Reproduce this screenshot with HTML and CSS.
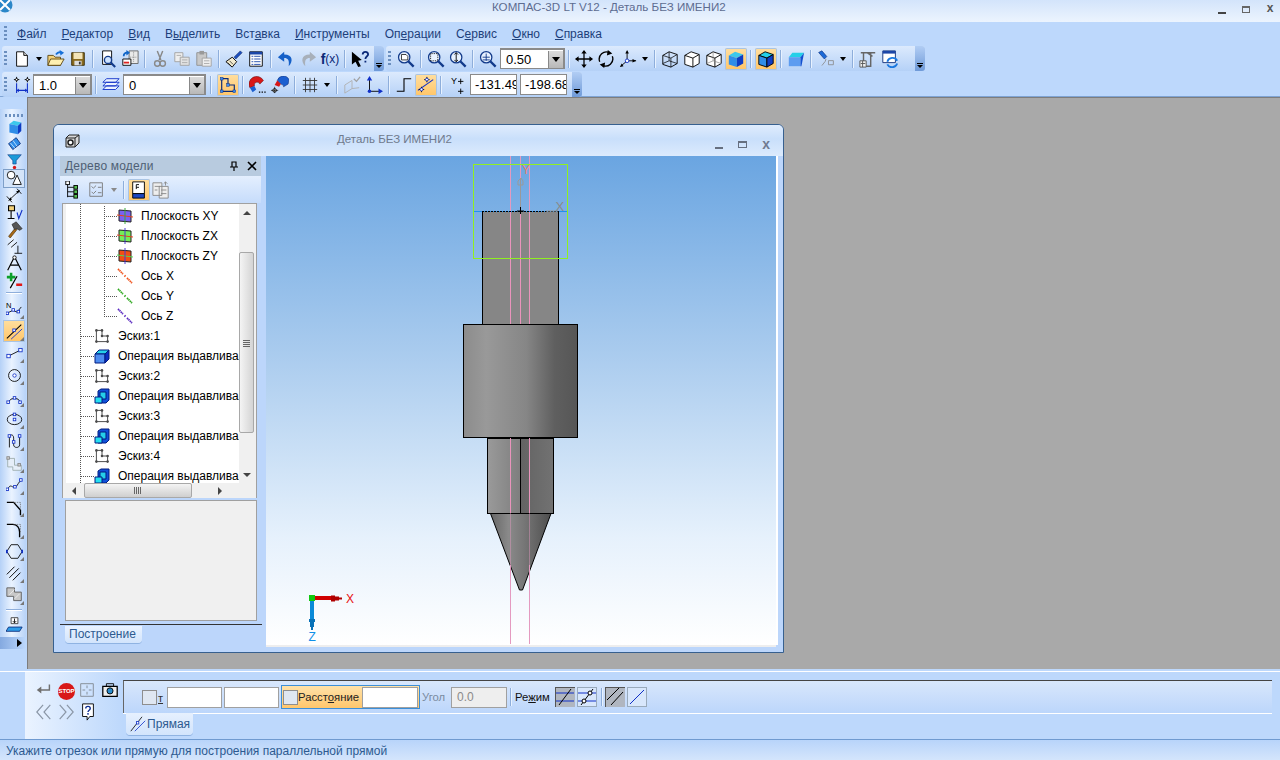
FILE: index.html
```html
<!DOCTYPE html>
<html lang="ru">
<head>
<meta charset="utf-8">
<title>КОМПАС-3D LT V12</title>
<link rel="stylesheet" href="styles.css">
</head>
<body>
<svg class="defs" aria-hidden="true">
<defs>
<symbol id="doc" viewBox="0 0 20 20"><path d="M4 2h8l4 4v12H4z" fill="#fff" stroke="#000"/><path d="M12 2v4h4" fill="#ddd" stroke="#000"/></symbol>
<symbol id="open" viewBox="0 0 20 20"><path d="M1 6h6l2 2h6v9H1z" fill="#f4d27a" stroke="#5b4510"/><path d="M1 17l3-7h15l-4 7z" fill="#fff0b0" stroke="#5b4510"/><path d="M10 5c2-3 4-3 6-2" fill="none" stroke="#1670d8" stroke-width="2"/><path d="M14 0l5 3-4 3z" fill="#1670d8"/></symbol>
<symbol id="save" viewBox="0 0 20 20"><path d="M3 3h14v14H3z" fill="#8a6b1e" stroke="#3a2c08"/><path d="M5 3h10v7H5z" fill="#f2e4b8"/><path d="M6 12h8v5H6z" fill="#ddd"/><path d="M11 13h2v3h-2z" fill="#333"/></symbol>
<symbol id="prev" viewBox="0 0 20 20"><path d="M4 1h10v15H4z" fill="#fff" stroke="#000"/><circle cx="10" cy="11" r="4" fill="#cfe4ff" stroke="#123a8a" stroke-width="1.5"/><path d="M13 14l5 5" stroke="#123a8a" stroke-width="2.4"/></symbol>
<symbol id="props" viewBox="0 0 20 20"><path d="M9 1h10v14H9z" fill="#e9e9e9" stroke="#666"/><path d="M14 2v12M10 8h8" stroke="#888" stroke-dasharray="1 1"/><path d="M2 10h9v7H2z" fill="#fff" stroke="#000"/><path d="M3 14h6" stroke="#d22" stroke-width="2"/><path d="M3 7c0-3 2-4 4-4" fill="none" stroke="#1266c8" stroke-width="2"/><path d="M6 0l4 3-4 3z" fill="#1266c8"/></symbol>
<symbol id="cut" viewBox="0 0 20 20"><path d="M7 1l4 10M13 1l-4 10" stroke="#888" stroke-width="1.6"/><circle cx="7" cy="15" r="3" fill="none" stroke="#8a8a8a" stroke-width="1.6"/><circle cx="13" cy="15" r="3" fill="none" stroke="#8a8a8a" stroke-width="1.6"/></symbol>
<symbol id="copy" viewBox="0 0 20 20"><path d="M2 3h9v10H2z" fill="#eee" stroke="#a0a0a0"/><path d="M8 8h10v9H8z" fill="#e2e2e2" stroke="#a0a0a0"/><path d="M4 6h5M10 11h6M10 14h6" stroke="#aaa"/></symbol>
<symbol id="paste" viewBox="0 0 20 20"><path d="M2 3h11v14H2z" fill="#c8c8c8" stroke="#909090"/><path d="M5 1h5v4H5z" fill="#999"/><path d="M8 9h10v9H8z" fill="#eee" stroke="#a0a0a0"/><path d="M10 12h6M10 15h6" stroke="#aaa"/></symbol>
<symbol id="brush" viewBox="0 0 20 20"><path d="M1 13l7-5 5 5-5 6z" fill="#f4ecd0" stroke="#000"/><path d="M3 14l4 4M5 12l4 4" stroke="#000" stroke-width=".7"/><path d="M10 8l7-7 2 2-7 7z" fill="#1c4fc0" stroke="#08205a" stroke-width=".6"/></symbol>
<symbol id="list" viewBox="0 0 20 20"><path d="M3 2h14v16H3z" fill="#fff" stroke="#000"/><path d="M3 2h14v3H3z" fill="#1b46a8"/><path d="M5 7h2M8 7h7M5 10h2M8 10h7M5 13h2M8 13h7M5 16h2M8 16h7" stroke="#1b46a8"/></symbol>
<symbol id="undo" viewBox="0 0 20 20"><path d="M8 2L1 8l7 5V9c4 0 6 2 5 9 5-5 5-13-5-13z" fill="#1560c8"/></symbol>
<symbol id="redo" viewBox="0 0 20 20"><path d="M12 2l7 6-7 5V9c-4 0-6 2-5 9-5-5-5-13 5-13z" fill="#a8b0ba"/></symbol>
<symbol id="help" viewBox="0 0 20 20"><path d="M1 2l11 9-4 1 3 6-3 1-3-6-4 3z" fill="#000"/><path d="M13 5c0-4 6-4 6 0 0 2-3 2-3 5M16 12v2" fill="none" stroke="#0c2a78" stroke-width="2"/></symbol>
<symbol id="zoomw" viewBox="0 0 20 20"><circle cx="8" cy="8" r="6.300" fill="#e8f2ff" stroke="#123a8a" stroke-width="1.400"/><path d="M5 5h5l2 2v4H5z" fill="#fff" stroke="#000" stroke-width=".8"/><path d="M12.500 12.500l6 6" stroke="#123a8a" stroke-width="2.600"/></symbol>
<symbol id="zoomd" viewBox="0 0 20 20"><circle cx="8" cy="8" r="6.300" fill="#e8f2ff" stroke="#123a8a" stroke-width="1.400"/><path d="M4 4h8v8H4z" fill="none" stroke="#000" stroke-dasharray="1 1"/><path d="M12.500 12.500l6 6" stroke="#123a8a" stroke-width="2.600"/></symbol>
<symbol id="zoomv" viewBox="0 0 20 20"><circle cx="8" cy="8" r="6.300" fill="#e8f2ff" stroke="#123a8a" stroke-width="1.400"/><path d="M8 3v10M6 5l2-2 2 2M6 11l2 2 2-2" fill="none" stroke="#000"/><path d="M12.500 12.500l6 6" stroke="#123a8a" stroke-width="2.600"/></symbol>
<symbol id="zoomp" viewBox="0 0 20 20"><circle cx="8" cy="8" r="6.300" fill="#e8f2ff" stroke="#123a8a" stroke-width="1.400"/><path d="M4 8h8M8 4v8M4 11h8" stroke="#123a8a"/><path d="M12.500 12.500l6 6" stroke="#123a8a" stroke-width="2.600"/></symbol>
<symbol id="move" viewBox="0 0 20 20"><path d="M10 1v18M1 10h18" stroke="#000" stroke-width="1.400"/><path d="M10 0l3 4H7zM10 20l3-4H7zM0 10l4-3v6zM20 10l-4-3v6z" fill="#000"/></symbol>
<symbol id="rot" viewBox="0 0 20 20"><path d="M3 13A8 8 0 0 1 14 3M17 7a8 8 0 0 1-11 10" fill="none" stroke="#000" stroke-width="1.500"/><path d="M12 0l5 4-6 2zM8 20l-5-4 6-2z" fill="#000"/></symbol>
<symbol id="axes" viewBox="0 0 20 20"><path d="M9 12V2M9 12h10M9 12l-7 6" stroke="#000"/><path d="M9 0l2 4H7zM19 12l-4-2v4zM1 19l2-4 2 3z" fill="#000"/><circle cx="9" cy="12" r="2" fill="#fff" stroke="#1030c8"/></symbol>
<symbol id="cube1" viewBox="0 0 20 20"><path d="M2 6l7-4 9 3v10l-7 4-9-3z" fill="none" stroke="#000"/><path d="M2 6l9 3 7-4M11 9v10M9 2v10l-7 3M9 12l9 3" fill="none" stroke="#000" stroke-width=".8"/></symbol>
<symbol id="cube2" viewBox="0 0 20 20"><path d="M2 6l7-4 9 3v10l-7 4-9-3z" fill="#fff" stroke="#000"/><path d="M2 6l9 3 7-4M11 9v10" fill="none" stroke="#000"/></symbol>
<symbol id="cube3" viewBox="0 0 20 20"><path d="M2 6l7-4 9 3v10l-7 4-9-3z" fill="#fff" stroke="#000"/><path d="M2 6l9 3 7-4M11 9v10" fill="none" stroke="#000"/><path d="M9 2v10l-7 3M9 12l9 3" fill="none" stroke="#888" stroke-width=".8"/></symbol>
<symbol id="cube4" viewBox="0 0 20 20"><path d="M2 6l7-4 9 3-7 4z" fill="#3cc8ec"/><path d="M2 6l9 3v10l-9-3z" fill="#2f8de8"/><path d="M11 9l7-4v10l-7 4z" fill="#0d3cc4"/></symbol>
<symbol id="cube5" viewBox="0 0 20 20"><path d="M2 6l7-4 9 3-7 4z" fill="#25d0e8" stroke="#000"/><path d="M2 6l9 3v10l-9-3z" fill="#2f8de8" stroke="#000"/><path d="M11 9l7-4v10l-7 4z" fill="#0d3cc4" stroke="#000"/></symbol>
<symbol id="cube6" viewBox="0 0 20 20"><path d="M6 3h13l-4 5H2z" fill="#25d0e8"/><path d="M2 8h13v10H2z" fill="#5d9cf0"/><path d="M15 8l4-5-3 15h-1z" fill="#1250d0"/></symbol>
<symbol id="light" viewBox="0 0 22 20"><path d="M2 2l4-2 6 7-3 3z" fill="#1c6ad8" stroke="#0a2a78" stroke-width=".7"/><path d="M11 10l-1 3-4 5M14 12h6v5h-6z" fill="none" stroke="#888"/></symbol>
<symbol id="crane" viewBox="0 0 20 20"><path d="M2 3h16M5 3v15h8V3M9 3l6 4" fill="none" stroke="#666" stroke-width="1.600"/><path d="M1 12h7v7H1z" fill="#eee" stroke="#555"/><path d="M2 15h5M4 12v7" stroke="#555"/></symbol>
<symbol id="refr" viewBox="0 0 20 20"><path d="M2 1h14v13H2z" fill="#fff" stroke="#10307a"/><path d="M2 1h14v3H2z" fill="#1b46a8"/><path d="M7 13a6 6 0 0 1 11-1M18 15a6 6 0 0 1-11 1" fill="none" stroke="#1b78e0" stroke-width="2"/></symbol>
<symbol id="snap" viewBox="0 0 20 20"><path d="M4 8v11M16 8v11M4 16h12" stroke="#1030c8" stroke-width="1.200"/><path d="M4 16l2.500-2v4zM16 16l-2.500-2v4z" fill="#1030c8"/><path d="M1 4h6M4 1v6M13 4h6M16 1v6" stroke="#000"/><circle cx="4" cy="4" r="1.300" fill="#fff" stroke="#000"/><circle cx="16" cy="4" r="1.300" fill="#fff" stroke="#000"/></symbol>
<symbol id="layers" viewBox="0 0 20 20"><path d="M5 3h14l-4 4H1zM5 7h14l-4 4H1zM5 11h14l-4 4H1z" fill="#eaf2ff" stroke="#1030c8"/></symbol>
<symbol id="sk" viewBox="0 0 20 20"><path d="M3 3v14h14v-7h-7V3z" fill="#fff" stroke="#222"/><circle cx="3" cy="3" r="1.600" fill="#4a4a4a"/><circle cx="10" cy="3" r="1.600" fill="#4a4a4a"/><circle cx="10" cy="10" r="1.600" fill="#4a4a4a"/><circle cx="17" cy="10" r="1.600" fill="#4a4a4a"/><circle cx="17" cy="17" r="1.600" fill="#4a4a4a"/><circle cx="3" cy="17" r="1.600" fill="#4a4a4a"/></symbol>
<symbol id="skb" viewBox="0 0 20 20"><path d="M3 3v14h14v-7h-7V3z" fill="none" stroke="#0a2a78" stroke-width="1.300"/><rect x="1.500" y="1.500" width="3" height="3" fill="#3c8cf0" stroke="#0a2a78" stroke-width=".5"/><rect x="8.500" y="8.500" width="3" height="3" fill="#3c8cf0" stroke="#0a2a78" stroke-width=".5"/><rect x="15.500" y="15.500" width="3" height="3" fill="#3c8cf0" stroke="#0a2a78" stroke-width=".5"/><rect x="1.500" y="15.500" width="3" height="3" fill="#3c8cf0" stroke="#0a2a78" stroke-width=".5"/></symbol>
<symbol id="mag1" viewBox="0 0 20 20"><path d="M1 13a8 8 0 0 1 15-8l-4 4a3 3 0 0 0-6 2z" fill="#d81818" stroke="#600" stroke-width=".6"/><path d="M1 13l5-2 2 4-4 3z" fill="#1c5fd0"/><path d="M11 18h1.500M14 18h1.500M17 18h1.500" stroke="#000" stroke-width="1.400"/></symbol>
<symbol id="mag2" viewBox="0 0 20 20"><path d="M20 4a7 7 0 0 0-13 1l4 4a3 3 0 0 1 3 3l5-3z" fill="#1c5fd0" stroke="#0a2a78" stroke-width=".6"/><path d="M7 5l4 4-2 3-5-2z" fill="#d81818"/><circle cx="4" cy="16" r="2" fill="#fff" stroke="#000"/><path d="M0 16h8M4 12v7" stroke="#000" stroke-width=".7"/></symbol>
<symbol id="grid" viewBox="0 0 20 20"><path d="M5 2v16M10 2v16M15 2v16M2 5h16M2 10h16M2 15h16" stroke="#333"/></symbol>
<symbol id="ang" viewBox="0 0 20 20"><path d="M2 10l8-5v9l-8 5zM10 14l8-1" fill="none" stroke="#b0b0b0"/><path d="M12 3l3 3 4-5" fill="none" stroke="#a0a0a0" stroke-width="1.400"/></symbol>
<symbol id="lcs" viewBox="0 0 20 20"><path d="M5 17V3M5 17h13" stroke="#000"/><path d="M5 0l3 5H2zM20 17l-5-3v6z" fill="#1030c8"/><circle cx="5" cy="17" r="2" fill="#1030c8"/></symbol>
<symbol id="step" viewBox="0 0 20 20"><path d="M2 17h8V3h8" fill="none" stroke="#000" stroke-width="1.200"/></symbol>
<symbol id="ortho" viewBox="0 0 20 20"><path d="M1 16L18 4" stroke="#1030c8" stroke-width="1.200"/><path d="M11 1v6M8 4h6M5 12v6M2 15h6" stroke="#000"/><circle cx="11" cy="4" r="1.600" fill="#fff" stroke="#1030c8"/><circle cx="5" cy="15" r="1.600" fill="#fff" stroke="#1030c8"/></symbol>
<symbol id="coord" viewBox="0 0 20 20"><path d="M13 3v6M10 6h6M13 14v6M10 17h6" stroke="#000"/></symbol>
<symbol id="tree1" viewBox="0 0 20 20"><path d="M4 1v17M4 7h7M4 12h7M4 17h7" stroke="#000"/><rect x="2" y="0" width="4" height="4" fill="#fff" stroke="#000"/><rect x="11" y="5" width="4" height="4" fill="#55c050" stroke="#000"/><rect x="11" y="10" width="4" height="4" fill="#55c050" stroke="#000"/><rect x="11" y="15" width="4" height="4" fill="#55c050" stroke="#000"/></symbol>
<symbol id="tree2" viewBox="0 0 20 20"><path d="M2 2h14v15H2z" fill="none" stroke="#777"/><path d="M4 6l2 2 3-3M4 12l2 2 3-3M11 7h4M11 13h4" fill="none" stroke="#777"/></symbol>
<symbol id="tree3" viewBox="0 0 20 20"><path d="M3 1h13v13H3z" fill="#fff" stroke="#000"/><path d="M3 14h13v5H3z" fill="#1c46c0" stroke="#000"/><path d="M7 4v5M7 4h3M7 7h3" stroke="#000"/></symbol>
<symbol id="tree4" viewBox="0 0 20 20"><path d="M1 2h10v14H1zM8 6h10v13H8z" fill="#eee" stroke="#888"/><path d="M3 6h6M3 10h3M10 10h6M10 14h6" stroke="#888"/><path d="M15 5V1M13 3l2-2 2 2" fill="none" stroke="#888"/></symbol>
<symbol id="pxy" viewBox="0 0 16 16"><path d="M2 2l12 1v11L2 13z" fill="#7a62f0" stroke="#222"/><path d="M0 7l16 2" stroke="#e8401c"/><path d="M8 0v16" stroke="#38a838"/></symbol>
<symbol id="pzx" viewBox="0 0 16 16"><path d="M2 2l12 1v11L2 13z" fill="#74ee58" stroke="#222"/><path d="M0 7l16 2" stroke="#e8401c"/><path d="M8 0v16" stroke="#4a3ad0"/></symbol>
<symbol id="pzy" viewBox="0 0 16 16"><path d="M2 2l12 1v11L2 13z" fill="#f24e14" stroke="#222"/><path d="M0 7l16 2" stroke="#50d850"/><path d="M8 0v16" stroke="#4a3ad0"/></symbol>
<symbol id="ax" viewBox="0 0 16 16"><path d="M1 1l5 5M7.500 7.500l1 1M10 10l5 5" fill="none" stroke="currentColor" stroke-width="1.800" stroke-dasharray="1.500 .5"/></symbol>
<symbol id="box1" viewBox="0 0 16 16"><path d="M1 6l4-4h10l-4 4z" fill="#25d0e8" stroke="#001a80"/><path d="M1 6h10v9H1z" fill="#4d8cf0" stroke="#001a80"/><path d="M11 6l4-4v9l-4 4z" fill="#0d2cc0" stroke="#001a80"/></symbol>
<symbol id="box2" viewBox="0 0 16 16"><path d="M4 3l3-2h8v11l-3 3H4z" fill="#1050d8" stroke="#001a80"/><path d="M6 4h6v7H6z" fill="#25d0e8" stroke="#001a80"/><path d="M1 9h7v6H1z" fill="#25e0f0" stroke="#001a80"/></symbol>
<symbol id="solid" viewBox="0 0 20 20"><path d="M4 6l5-4 9 2-4 4z" fill="#3cc8ec"/><path d="M4 6l10 2v10L4 16z" fill="#2f8de8"/><path d="M14 8l4-4v10l-4 4z" fill="#0d3cc4"/></symbol>
<symbol id="surf" viewBox="0 0 20 20"><path d="M3 9l9-7 5 7-9 7z" fill="#2f8de8" stroke="#0a2a78"/><path d="M8 5l5 7M5 8l6 7" stroke="#cfe8ff"/></symbol>
<symbol id="funnel" viewBox="0 0 20 20"><path d="M2 2h16l-6 7v4H8V9z" fill="#1c9ad8" stroke="#0a2a78" stroke-width=".6"/><circle cx="10" cy="17" r="2" fill="#d81818"/></symbol>
<symbol id="geom" viewBox="0 0 20 20"><circle cx="6" cy="6" r="4.500" fill="#fff" stroke="#000"/><path d="M13 6l5 11H8z" fill="#fff" stroke="#000"/></symbol>
<symbol id="dim" viewBox="0 0 20 20"><path d="M3 16L16 4M1 11l6 7M13 2l5 6" fill="none" stroke="#000"/><path d="M3 16l4-1-2-3zM16 4l-4 1 2 3z" fill="#000"/></symbol>
<symbol id="cons" viewBox="0 0 20 20"><path d="M3 2h7v6H3z" fill="#f4d27a"/><path d="M3 2h7v6H3zM6 8v9M2 17h8" fill="none" stroke="#000" stroke-width="1.300"/><path d="M13 10l2 7 4-10" fill="none" stroke="#1030c8" stroke-width="1.300"/></symbol>
<symbol id="hammer" viewBox="0 0 20 20"><path d="M3 18L11 8l2 2-8 10z" fill="#a86a18" stroke="#442a05" stroke-width=".7"/><path d="M7 4l5-3 7 8-3 2-3-2-3 1z" fill="#555" stroke="#222" stroke-width=".7"/></symbol>
<symbol id="para" viewBox="0 0 20 20"><path d="M2 8l7-6M6 11l7-6M10 18h9M14 18V9" fill="none" stroke="#000"/></symbol>
<symbol id="comp" viewBox="0 0 20 20"><path d="M10 2L2 18M10 2l8 16M5 12h10" fill="none" stroke="#000" stroke-width="1.400"/><circle cx="10" cy="3" r="2" fill="#fff" stroke="#000"/></symbol>
<symbol id="plus" viewBox="0 0 20 20"><path d="M6 1v10M1 6h10" stroke="#0ca02a" stroke-width="3"/><path d="M12 15h7" stroke="#e01818" stroke-width="3"/><path d="M5 19L13 5" stroke="#000" stroke-width="1.400"/></symbol>
<symbol id="poly" viewBox="0 0 20 20"><path d="M2 14l6-3 5 2 5-6" fill="none" stroke="#000"/><rect x="0" y="13" width="3" height="3" fill="#fff" stroke="#1030c8"/><rect x="7" y="9" width="3" height="3" fill="#fff" stroke="#1030c8"/><rect x="13" y="11" width="3" height="3" fill="#fff" stroke="#1030c8"/><text x="0" y="8" class="nmark">N</text></symbol>
<symbol id="pline" viewBox="0 0 20 20"><path d="M1 18L18 2" stroke="#000" stroke-width="1.200"/><path d="M6 19L19 7" stroke="#1030c8"/><rect x="8" y="7" width="3" height="3" fill="#fff" stroke="#1030c8"/></symbol>
<symbol id="seg" viewBox="0 0 20 20"><path d="M3 13l14-7" stroke="#000"/><rect x="1" y="11" width="4" height="4" fill="#fff" stroke="#1030c8"/><rect x="15" y="4" width="4" height="4" fill="#fff" stroke="#1030c8"/></symbol>
<symbol id="circ" viewBox="0 0 20 20"><circle cx="10" cy="10" r="7" fill="none" stroke="#000"/><circle cx="10" cy="10" r="2" fill="#fff" stroke="#1030c8"/></symbol>
<symbol id="arc" viewBox="0 0 20 20"><path d="M3 15A8 8 0 0 1 17 15" fill="none" stroke="#000"/><rect x="1" y="14" width="3" height="3" fill="#fff" stroke="#1030c8"/><rect x="8.500" y="9" width="3" height="3" fill="#fff" stroke="#1030c8"/><rect x="15" y="14" width="3" height="3" fill="#fff" stroke="#1030c8"/></symbol>
<symbol id="ell" viewBox="0 0 20 20"><ellipse cx="10" cy="10" rx="8.500" ry="6" fill="none" stroke="#000"/><rect x="8.500" y="8.500" width="3" height="3" fill="#fff" stroke="#1030c8"/><rect x="8.500" y="2.500" width="3" height="3" fill="#fff" stroke="#1030c8"/></symbol>
<symbol id="spl" viewBox="0 0 20 20"><path d="M4 17V6c0-5 5-5 5 0v8c0 4 7 4 7 0V3" fill="none" stroke="#000"/><rect x="2.500" y="2" width="3" height="3" fill="#fff" stroke="#1030c8"/><rect x="14.500" y="2" width="3" height="3" fill="#fff" stroke="#1030c8"/><rect x="7.500" y="9" width="3" height="3" fill="#fff" stroke="#1030c8"/></symbol>
<symbol id="lin" viewBox="0 0 20 20"><path d="M2 4h8v8h8v6H8v-4H2z" fill="#e6eef8" stroke="#9aa"/><rect x="1" y="2" width="3" height="3" fill="#ccc" stroke="#888"/><rect x="14" y="10" width="3" height="3" fill="#ccc" stroke="#888"/></symbol>
<symbol id="nurb" viewBox="0 0 20 20"><path d="M2 15c3-9 6-1 9-3s4-7 7-8" fill="none" stroke="#000"/><rect x="0" y="13" width="3" height="3" fill="#fff" stroke="#1030c8"/><rect x="9" y="10" width="3" height="3" fill="#fff" stroke="#1030c8"/><rect x="16" y="2" width="3" height="3" fill="#fff" stroke="#1030c8"/></symbol>
<symbol id="ch" viewBox="0 0 20 20"><path d="M1 4h8l8 9v6" fill="none" stroke="#000" stroke-width="1.600"/><path d="M9 4h8v9" fill="none" stroke="#666" stroke-dasharray="1 1"/></symbol>
<symbol id="fil" viewBox="0 0 20 20"><path d="M1 4h7c5 0 8 4 8 9v6" fill="none" stroke="#000" stroke-width="1.600"/><path d="M9 4h8v9" fill="none" stroke="#666" stroke-dasharray="1 1"/></symbol>
<symbol id="hex" viewBox="0 0 20 20"><path d="M6 2h8l5 8-5 8H6l-5-8z" fill="none" stroke="#000"/><path d="M1 8v4M19 8v4" stroke="#1030c8" stroke-width="2"/></symbol>
<symbol id="eq" viewBox="0 0 20 20"><path d="M1 11l9-9M4 15L15 4M8 18l9-9" stroke="#000" stroke-width="1.100"/></symbol>
<symbol id="hatch" viewBox="0 0 20 20"><path d="M1 1h9v5h8v10h-9v-5H1z" fill="#c8c8c8" stroke="#555"/><path d="M4 9l6-6M10 14l6-6" stroke="#eee"/></symbol>
<symbol id="sk3" viewBox="0 0 20 20"><path d="M3 13h16l-3 5H0z" fill="#2f9ce8" stroke="#0a2a78"/><path d="M6 2h8v7H6z" fill="#fff" stroke="#333"/><path d="M10 3v5M8 6l2 2 2-2" fill="none" stroke="#000"/></symbol>
<symbol id="enter" viewBox="0 0 20 20"><path d="M4 10h12V4" fill="none" stroke="#707070" stroke-width="1.600"/><path d="M2 10l5-4v8z" fill="#707070"/></symbol>
<symbol id="frame" viewBox="0 0 20 20"><path d="M3 3h14v14H3z" fill="none" stroke="#808890"/><path d="M10 5v3M10 12v3M5 10h3M12 10h3" stroke="#808890"/></symbol>
<symbol id="cam" viewBox="0 0 20 20"><path d="M2 6h16v11H2z" fill="#eee" stroke="#000" stroke-width="1.400"/><path d="M6 3h8v3H6z" fill="none" stroke="#000"/><circle cx="10" cy="11" r="3.400" fill="#2a8ccc" stroke="#000"/></symbol>
<symbol id="qm" viewBox="0 0 20 20"><path d="M4 1h12v14h-4l-3 4v-4H4z" fill="#fff" stroke="#000"/><path d="M7.500 6c0-3 5-3 5 0 0 2-2.500 2-2.500 4M10 11v2" fill="none" stroke="#0a2a90" stroke-width="1.500"/></symbol>
<symbol id="chl" viewBox="0 0 20 20"><path d="M9 2L2 10l7 8M17 2l-7 8 7 8" fill="none" stroke="#8a96a6" stroke-width="1.300"/></symbol>
<symbol id="chr" viewBox="0 0 20 20"><path d="M3 2l7 8-7 8M11 2l7 8-7 8" fill="none" stroke="#8a96a6" stroke-width="1.300"/></symbol>
<symbol id="m1" viewBox="0 0 20 20"><path d="M1 6h18M1 14h18" stroke="#1030c8"/><path d="M4 18L16 2" stroke="#000"/></symbol>
<symbol id="m2" viewBox="0 0 20 20"><path d="M1 6h18M1 14h18" stroke="#1030c8"/><path d="M4 18L16 2" stroke="#000"/><circle cx="13" cy="6" r="2" fill="#fff" stroke="#000"/><circle cx="7" cy="14" r="2" fill="#fff" stroke="#000"/></symbol>
<symbol id="m3" viewBox="0 0 20 20"><path d="M2 13L14 1M6 18L18 5" stroke="#000"/></symbol>
<symbol id="m4" viewBox="0 0 20 20"><path d="M3 17L17 3" stroke="#1030c8"/></symbol>
<symbol id="ln" viewBox="0 0 20 20"><path d="M1 19L15 1" stroke="#000"/><path d="M6 19L19 6" stroke="#1030c8"/><rect x="8" y="7" width="3" height="3" fill="#fff" stroke="#1030c8"/></symbol>
<linearGradient id="gMid" x1="0" x2="1" y1="0" y2="0"><stop offset="0" stop-color="#8c8c8c"/><stop offset=".2" stop-color="#999"/><stop offset=".55" stop-color="#868686"/><stop offset=".8" stop-color="#5f5f5f"/><stop offset="1" stop-color="#565656"/></linearGradient>
<linearGradient id="gLowL" x1="0" x2="1" y1="0" y2="0"><stop offset="0" stop-color="#9a9a9a"/><stop offset="1" stop-color="#7e7e7e"/></linearGradient>
<linearGradient id="gLowR" x1="0" x2="1" y1="0" y2="0"><stop offset="0" stop-color="#636363"/><stop offset="1" stop-color="#727272"/></linearGradient>
<linearGradient id="gCone" x1="0" x2="1" y1="0" y2="0"><stop offset="0" stop-color="#666"/><stop offset=".3" stop-color="#8a8a8a"/><stop offset=".55" stop-color="#777"/><stop offset="1" stop-color="#4e4e4e"/></linearGradient>
</defs>
</svg>

<div class="app">
  <header class="title">
    <svg class="logo" viewBox="0 0 14 14"><circle cx="5" cy="5" r="7.500" fill="#2a86c8"/><path d="M0 0l10 10M10 0L0 10" stroke="#fff" stroke-width="2"/></svg>
    <span class="title-text">КОМПАС-3D LT V12 - Деталь БЕЗ ИМЕНИ2</span>
    <span class="winbtns"><i class="wb-min"></i><i class="wb-max"></i><i class="wb-x">x</i></span>
  </header>

  <nav class="menu">
    <i class="grip"></i>
    <span><u>Ф</u>айл</span><span><u>Р</u>едактор</span><span><u>В</u>ид</span><span>В<u>ы</u>делить</span><span>Вст<u>а</u>вка</span><span><u>И</u>нструменты</span><span>Оп<u>е</u>рации</span><span>С<u>е</u>рвис</span><span><u>О</u>кно</span><span><u>С</u>правка</span>
  </nav>

  <div class="tbrow">
    <div class="tb tb-a">
      <i class="grip"></i>
      <b class="b"><svg><use href="#doc"/></svg></b><b class="a"></b>
      <b class="b"><svg><use href="#open"/></svg></b><b class="b"><svg><use href="#save"/></svg></b><i class="s"></i>
      <b class="b"><svg><use href="#prev"/></svg></b><b class="b"><svg><use href="#props"/></svg></b><i class="s"></i>
      <b class="b"><svg><use href="#cut"/></svg></b><b class="b"><svg><use href="#copy"/></svg></b><b class="b"><svg><use href="#paste"/></svg></b><i class="s"></i>
      <b class="b"><svg><use href="#brush"/></svg></b><b class="b"><svg><use href="#list"/></svg></b><i class="s"></i>
      <b class="b"><svg><use href="#undo"/></svg></b><b class="b"><svg><use href="#redo"/></svg></b><b class="b fx"><em>f</em><span>(x)</span></b><i class="s"></i>
      <b class="b"><svg><use href="#help"/></svg></b>
      <i class="over"></i>
    </div>
    <div class="tb tb-b">
      <i class="grip"></i>
      <b class="b"><svg><use href="#zoomw"/></svg></b><i class="s"></i>
      <b class="b"><svg><use href="#zoomd"/></svg></b><b class="b"><svg><use href="#zoomv"/></svg></b><i class="s"></i>
      <b class="b"><svg><use href="#zoomp"/></svg></b>
      <span class="combo c-zoom"><span class="val">0.50</span><i class="drop"></i></span><i class="s"></i>
      <b class="b"><svg><use href="#move"/></svg></b><b class="b"><svg><use href="#rot"/></svg></b><b class="b"><svg><use href="#axes"/></svg></b><b class="a"></b><i class="s"></i>
      <b class="b"><svg><use href="#cube1"/></svg></b><b class="b"><svg><use href="#cube2"/></svg></b><b class="b"><svg><use href="#cube3"/></svg></b><b class="b on"><svg><use href="#cube4"/></svg></b><i class="s"></i>
      <b class="b on"><svg><use href="#cube5"/></svg></b><i class="s"></i>
      <b class="b"><svg><use href="#cube6"/></svg></b><i class="s"></i>
      <b class="b"><svg><use href="#light"/></svg></b><b class="a"></b><i class="s"></i>
      <b class="b"><svg><use href="#crane"/></svg></b><b class="b"><svg><use href="#refr"/></svg></b>
      <i class="over"></i>
    </div>
  </div>

  <div class="tbrow second">
    <div class="tb tb-c">
      <i class="grip"></i>
      <b class="b"><svg><use href="#snap"/></svg></b>
      <span class="combo c-step"><span class="val">1.0</span><i class="drop"></i></span><i class="s"></i>
      <b class="b"><svg><use href="#layers"/></svg></b>
      <span class="combo c-layer"><span class="val">0</span><i class="drop"></i></span><i class="s s-wide"></i>
      <b class="b on"><svg><use href="#skb"/></svg></b><i class="s"></i>
      <b class="b"><svg><use href="#mag1"/></svg></b><b class="b"><svg><use href="#mag2"/></svg></b><i class="s"></i>
      <b class="b"><svg><use href="#grid"/></svg></b><b class="a"></b><i class="s"></i>
      <b class="b"><svg><use href="#ang"/></svg></b><b class="b"><svg><use href="#lcs"/></svg></b><i class="s"></i>
      <b class="b"><svg><use href="#step"/></svg></b><b class="b on"><svg><use href="#ortho"/></svg></b><i class="s"></i>
      <b class="b coord"><span>Y</span><svg><use href="#coord"/></svg></b>
      <span class="coordbox">-131.49</span><span class="coordbox">-198.68</span>
      <i class="over"></i>
    </div>
  </div>

  <div class="main">
    <aside class="side">
      <div class="sidebar">
        <i class="hgrip"></i>
        <b class="l"><svg><use href="#solid"/></svg></b>
        <b class="l"><svg><use href="#surf"/></svg></b>
        <b class="l"><svg><use href="#funnel"/></svg></b>
        <b class="l fr"><svg><use href="#geom"/></svg></b>
        <b class="l"><svg><use href="#dim"/></svg></b>
        <b class="l"><svg><use href="#cons"/></svg></b>
        <b class="l"><svg><use href="#hammer"/></svg></b>
        <b class="l"><svg><use href="#para"/></svg></b>
        <b class="l"><svg><use href="#comp"/></svg></b>
        <b class="l"><svg><use href="#plus"/></svg></b>
        <i class="hs hs-a"></i>
        <b class="l t"><svg><use href="#poly"/></svg></b>
        <b class="l t act"><svg><use href="#pline"/></svg></b>
        <b class="l t"><svg><use href="#seg"/></svg></b>
        <b class="l t"><svg><use href="#circ"/></svg></b>
        <b class="l t"><svg><use href="#arc"/></svg></b>
        <b class="l t"><svg><use href="#ell"/></svg></b>
        <b class="l t"><svg><use href="#spl"/></svg></b>
        <b class="l t"><svg><use href="#lin"/></svg></b>
        <b class="l t"><svg><use href="#nurb"/></svg></b>
        <b class="l t"><svg><use href="#ch"/></svg></b>
        <b class="l t"><svg><use href="#fil"/></svg></b>
        <b class="l t"><svg><use href="#hex"/></svg></b>
        <b class="l t"><svg><use href="#eq"/></svg></b>
        <b class="l t"><svg><use href="#hatch"/></svg></b>
        <i class="hs hs-b"></i>
        <b class="l t noar"><svg><use href="#sk3"/></svg></b>
        <i class="sidefoot"></i>
      </div>
    </aside>

    <section class="desk">
      <div class="win">
        <div class="win-title">
          <svg class="win-ico" viewBox="0 0 16 16"><path d="M2 5l3-3h10v8l-4 4H2z" fill="#d8d8d8" stroke="#222"/><path d="M2 5h9v9M11 5l4-3" fill="none" stroke="#222"/><circle cx="6.500" cy="9.500" r="2.500" fill="#fff" stroke="#222" stroke-width="1.500"/></svg>
          <span class="win-text">Деталь БЕЗ ИМЕНИ2</span>
          <span class="win-ctl"><i class="c-min"></i><i class="c-max"></i><i class="c-x">x</i></span>
        </div>
        <div class="win-body">
          <div class="panel">
            <div class="panel-head"><span>Дерево модели</span><span class="head-ic"><svg viewBox="0 0 10 10"><path d="M3 1h4v5H3zM1 6h8M5 6v4" fill="none" stroke="#000" stroke-width="1.200"/></svg><svg viewBox="0 0 10 10"><path d="M1 1l8 8M9 1L1 9" stroke="#000" stroke-width="1.600"/></svg></span></div>
            <div class="panel-tools">
              <b class="b"><svg><use href="#tree1"/></svg></b>
              <b class="b wide"><svg><use href="#tree2"/></svg></b><b class="a dim"></b><i class="s"></i>
              <b class="b on"><svg><use href="#tree3"/></svg></b>
              <b class="b"><svg><use href="#tree4"/></svg></b>
            </div>
            <div class="treebox">
              <div class="tree-main">
                <div class="tree">
                  <div class="sub">
                    <div class="row lv2"><svg><use href="#pxy"/></svg>Плоскость XY</div>
                    <div class="row lv2"><svg><use href="#pzx"/></svg>Плоскость ZX</div>
                    <div class="row lv2"><svg><use href="#pzy"/></svg>Плоскость ZY</div>
                    <div class="row lv2 ax-x"><svg><use href="#ax"/></svg>Ось X</div>
                    <div class="row lv2 ax-y"><svg><use href="#ax"/></svg>Ось Y</div>
                    <div class="row lv2 ax-z"><svg><use href="#ax"/></svg>Ось Z</div>
                  </div>
                  <div class="row"><svg><use href="#sk"/></svg>Эскиз:1</div>
                  <div class="row"><svg><use href="#box1"/></svg>Операция выдавливания:1</div>
                  <div class="row"><svg><use href="#sk"/></svg>Эскиз:2</div>
                  <div class="row"><svg><use href="#box2"/></svg>Операция выдавливания:2</div>
                  <div class="row"><svg><use href="#sk"/></svg>Эскиз:3</div>
                  <div class="row"><svg><use href="#box2"/></svg>Операция выдавливания:3</div>
                  <div class="row"><svg><use href="#sk"/></svg>Эскиз:4</div>
                  <div class="row"><svg><use href="#box2"/></svg>Операция выдавливания:4</div>
                </div>
                <div class="vscroll"><i class="up"></i><i class="vthumb"><i class="grips"></i></i><i class="dn"></i></div>
              </div>
              <div class="hscroll"><i class="lf"></i><i class="hthumb"><i class="hgrips"></i></i><i class="rt"></i></div>
            </div>
            <div class="lowerbox"></div>
            <div class="tabs"><span class="tab">Построение</span></div>
          </div>
          <div class="view">
            <svg class="scene" viewBox="266 156 510 489" preserveAspectRatio="none">
              <path d="M510.500 156V324M520.500 156V324M529.500 156V324" stroke="#e49ac0" fill="none"/>
              <rect x="482.500" y="211.500" width="76" height="113" fill="#868686" stroke="#000"/>
              <path d="M510.500 212V324M520.500 212V324M529.500 212V324" stroke="#ea94bc" fill="none"/>
              <rect x="463.500" y="324.500" width="114" height="113" fill="url(#gMid)" stroke="#000"/>
              <rect x="487.500" y="438.500" width="33" height="75" fill="url(#gLowL)" stroke="#000"/>
              <rect x="520.500" y="438.500" width="33" height="75" fill="url(#gLowR)" stroke="#000"/>
              <path d="M490.500 513.500h60.500L522.500 590h-3z" fill="url(#gCone)" stroke="#000"/>
              <path d="M510.500 438V513M529.500 438V513" stroke="#ea94bc" fill="none"/>
              <path d="M510.500 513V565M529.500 513V565" stroke="#e49ac0" stroke-opacity=".45" fill="none"/>
              <path d="M510.500 565V644M529.500 565V644" stroke="#e49ac0" fill="none"/>
              <rect x="473.500" y="164.500" width="94" height="94" fill="none" stroke="#90f020"/>
              <path d="M474 211.500H567" stroke="#2090f0"/>
              <path d="M482 211.500H559" stroke="#000" stroke-dasharray="2 1"/>
              <path d="M520.500 178V210" stroke="#999"/>
              <path d="M518 185h5v-4l-2-3-3 3z" fill="none" stroke="#999"/>
              <text class="sc-y" x="522" y="174">Y</text>
              <path d="M546 211h12" stroke="#999"/>
              <text class="sc-x" x="555.500" y="211">X</text>
              <path d="M520.500 207v7M517 211h7" stroke="#000"/>
              <path d="M312 598H334" stroke="#d00000" stroke-width="4"/>
              <path d="M331 595.500h4v6h-4zM335 596.500h4v4h-4zM339 597.500h3v2h-3z" fill="#b00000"/>
              <path d="M312 598V624" stroke="#0a8ad8" stroke-width="4"/>
              <path d="M309 619h6v3h-6zM310 622h4v5h-4zM311 627h2v3h-2z" fill="#0872b8"/>
              <rect x="309" y="595" width="6" height="6" fill="#10c810"/>
              <text class="sc-ax red" x="346" y="603">X</text>
              <text class="sc-ax blu" x="308.500" y="641">Z</text>
            </svg>
          </div>
        </div>
      </div>
    </section>
  </div>

  <div class="bottom">
    <div class="cmd">
      <div class="cmd-row">
        <b class="cb"><svg><use href="#enter"/></svg></b><span class="stop">STOP</span><b class="cb"><svg><use href="#frame"/></svg></b><b class="cb cam"><svg><use href="#cam"/></svg></b>
      </div>
      <div class="cmd-row">
        <b class="cb"><svg><use href="#chl"/></svg></b><b class="cb chr"><svg><use href="#chr"/></svg></b><b class="cb chr"><svg><use href="#qm"/></svg></b>
      </div>
    </div>
    <div class="propwrap">
      <div class="props">
        <i class="check"></i><span class="tlabel"><u>т</u></span>
        <i class="inp i1"></i><i class="inp i2"></i>
        <span class="hl"><i class="check"></i><span class="hl-text">Расст<u>о</u>яние</span><i class="inp i3"></i></span>
        <span class="dis">Угол</span>
        <span class="inp angle">0.0</span>
        <i class="s"></i>
        <span class="mode">Ре<u>ж</u>им</span>
        <b class="mb pressed"><svg><use href="#m1"/></svg></b><b class="mb"><svg><use href="#m2"/></svg></b>
        <i class="s s-tight"></i>
        <b class="mb pressed"><svg><use href="#m3"/></svg></b><b class="mb"><svg><use href="#m4"/></svg></b>
      </div>
      <div class="proptabs"><span class="ptab"><svg><use href="#ln"/></svg>Прямая</span></div>
    </div>
  </div>

  <footer class="status">Укажите отрезок или прямую для построения параллельной прямой</footer>
</div>
</body>
</html>
```
FILE: styles.css
```css
* { box-sizing: border-box; }
html, body { margin: 0; padding: 0; height: 760px; overflow: hidden; }
body { font-family: "Liberation Sans", Arial, sans-serif; font-size: 12px; color: #000; background: #bdd8fc; }
i, b { display: block; font-style: normal; font-weight: normal; flex: none; }
.defs { width: 0; height: 0; position: absolute; }
.app { display: flex; flex-direction: column; width: 1280px; height: 760px; }
.nmark { font-size: 9px; fill: #000; }

.title { height: 22px; flex: none; display: flex; align-items: flex-start; background: linear-gradient(#d3e4fb, #ecf4fe); position: relative; }
.logo { width: 14px; height: 14px; flex: none; }
.title-text { position: absolute; left: 492px; top: 0; font-size: 11.600px; line-height: 14px; color: #5d6c91; }
.winbtns { position: absolute; right: 6px; top: 2px; display: flex; gap: 16px; align-items: center; }
.winbtns i { width: 8px; }
.wb-min { height: 2px; margin-top: 9px; background: #444; }
.wb-max { height: 7px; border: 1px solid #666; border-top-width: 2px; margin-top: 3px; }
.wb-x { font-size: 12px; font-weight: bold; color: #555; line-height: 12px; text-align: center; }

.menu { height: 24px; flex: none; display: flex; align-items: center; gap: 15px; padding-left: 4px; background: #bdd8fc; color: #1d3f7a; font-size: 12px; }
.menu .grip { margin-right: -5px; }
.grip { width: 3px; height: 16px; margin-right: 3px; background: repeating-linear-gradient(#6b8fbf 0 2px, transparent 2px 4px); }

.tbrow { display: flex; height: 26px; flex: none; gap: 2px; padding-left: 2px; }
.tbrow.second { height: 25px; border-bottom: 1px solid #7fa4d4; }
.tb { display: flex; align-items: center; height: 25px; padding-left: 2px; background: linear-gradient(#dceafd, #b5d1f7); border-radius: 3px; }
.tb-a { width: 382px; }
.tb-b { width: 539px; }
.tb-c { width: 580px; }
.tb .grip { margin-right: 4px; }
.b { width: 22px; height: 22px; display: flex; align-items: center; justify-content: center; border-radius: 2px; }
.b svg { width: 18px; height: 18px; }
.a { width: 12px; height: 22px; position: relative; }
.a::after { content: ""; position: absolute; left: 3px; top: 9px; border: 3.500px solid transparent; border-top: 4px solid #000; border-bottom: 0; }
.a.dim::after { border-top-color: #8a8a8a; }
.s { width: 1px; height: 18px; background: #8eaedb; margin: 0 4px 0 3px; box-shadow: 1px 0 #e8f2ff; }
.s-wide { margin-right: 6px; margin-left: 4px; }
.s-tight { margin: 0 3px 0 2px; }
.on { background: linear-gradient(#ffdfa0, #ffc568); box-shadow: inset 0 0 0 1px #a9c4e4; }
.fx { font-size: 12px; color: #0c2a78; }
.fx em { font-style: normal; font-weight: bold; font-size: 14px; }
.over { margin-left: auto; width: 10px; height: 25px; border-radius: 0 3px 3px 0; background: linear-gradient(#b1cdf4, #6f9ad8); position: relative; }
.over::after { content: ""; position: absolute; left: 2px; top: 17px; width: 6px; border-top: 1px solid #000; height: 2px; }
.over::before { content: ""; position: absolute; left: 2px; top: 19px; border: 3px solid transparent; border-top: 3px solid #000; border-bottom: 0; }

.combo { display: flex; align-items: center; justify-content: space-between; height: 21px; background: #fff; border: 1px solid #8a8a8a; border-right-width: 2px; border-top-width: 2px; font-size: 13px; flex: none; }
.val { padding-left: 5px; }
.drop { width: 15px; height: 17px; background: linear-gradient(#dcdcdc, #b8b8b8); border-left: 1px solid #888; position: relative; }
.drop::after { content: ""; position: absolute; left: 3px; top: 6px; border: 4px solid transparent; border-top: 5px solid #000; border-bottom: 0; }
.c-zoom { width: 65px; margin-left: 1px; }
.c-step { width: 59px; }
.c-layer { width: 83px; margin-left: 1px; }
.coord { margin: 0 -1px 0 3px; }
.coord span { font-size: 9px; margin-right: -8px; margin-top: -8px; }
.coordbox { width: 47px; height: 21px; margin-left: 1px; margin-right: 2px; background: #fff; border: 1px solid #8a8a8a; padding-left: 4px; font-size: 13px; line-height: 19px; overflow: hidden; white-space: nowrap; flex: none; }

.main { flex: none; height: 574px; display: flex; }
.side { width: 27px; flex: none; padding-top: 12px; background: #bdd8fc; }
.sidebar { width: 26px; height: 540px; display: flex; flex-direction: column; align-items: center; padding: 0 0 0 2px; background: linear-gradient(90deg, #b5d1f7, #eaf3ff 45%, #b8d3f8); border-radius: 0 0 3px 3px; position: relative; }
.hgrip { width: 18px; height: 3px; margin: 5px 0 2px; background: repeating-linear-gradient(90deg, #6b8fbf 0 2px, transparent 2px 4px); }
.l { width: 22px; height: 17px; display: flex; align-items: center; justify-content: center; position: relative; }
.l svg { width: 17px; height: 17px; }
.l.t { height: 22px; }
.l.t::after { content: ""; position: absolute; right: 1px; bottom: 1px; border-left: 4px solid transparent; border-bottom: 4px solid #777; }
.l.noar::after { display: none; }
.fr { box-shadow: inset 0 0 0 1px #7e9fc8; background: #d4e4f9; height: 19px; margin: -1px 0; }
.act { background: linear-gradient(#ffdfa0, #ffc568); box-shadow: inset 0 0 0 1px #a9c4e4; }
.hs { width: 16px; height: 1px; background: #8eaedb; box-shadow: 0 1px #fff; flex: none; }
.hs-a { margin: 3px 0 5px; }
.hs-b { margin: 3px 0 3px; }
.sidefoot { margin-top: auto; width: 26px; height: 12px; margin-left: -2px; background: linear-gradient(90deg, #84a9e0, #bdd8fc); position: relative; border-radius: 0 0 4px 0; }
.sidefoot::after { content: ""; position: absolute; right: 4px; top: 2px; border-left: 5px solid #000; border-top: 4px solid transparent; border-bottom: 4px solid transparent; }

.desk { flex: 1; height: 572px; background: #a9a9a9; border-top: 1px solid #7d7d7d; border-left: 1px solid #7d7d7d; position: relative; }
.win { position: absolute; left: 25px; top: 26px; width: 731px; height: 529px; border: 1px solid #37608f; border-radius: 6px 6px 0 0; background: #bcd6fb; display: flex; flex-direction: column; }
.win-title { height: 31px; flex: none; display: flex; align-items: center; padding-left: 10px; position: relative; background: linear-gradient(#dfecfd, #c9dffb 45%, #dcebfd); border-radius: 5px 5px 0 0; }
.win-ico { width: 16px; height: 16px; }
.win-text { position: absolute; left: 283px; top: 8px; font-size: 11.500px; color: #707a8c; }
.win-ctl { position: absolute; right: 13px; top: 15px; display: flex; align-items: center; gap: 15px; }
.c-min { width: 8px; height: 2px; margin-top: 6px; background: #666f7f; }
.c-max { width: 9px; height: 7px; border: 1px solid #666f7f; border-top-width: 2px; }
.c-x { font-size: 14px; line-height: 9px; font-weight: bold; color: #707a90; }

.win-body { flex: 1; display: flex; padding: 0 7px 0 6px; }
.panel { width: 201px; flex: none; display: flex; flex-direction: column; }
.panel-head { height: 20px; display: flex; align-items: center; justify-content: space-between; padding: 0 4px 0 5px; background: #b8cbdf; color: #4f5f74; font-size: 12px; letter-spacing: .2px; flex: none; }
.head-ic { display: flex; gap: 8px; }
.head-ic svg { width: 10px; height: 10px; }
.panel-tools { height: 27px; flex: none; display: flex; align-items: center; padding-left: 2px; background: linear-gradient(#e4effe, #c6dcfb); }
.panel-tools .wide { margin-left: 2px; }
.treebox { width: 195px; height: 295px; margin-left: 2px; flex: none; border: 1px solid #a0a0a0; background: #f0f0f0; display: flex; flex-direction: column; }
.tree-main { height: 279px; display: flex; flex: none; }
.tree { width: 173px; margin-left: 3px; height: 279px; overflow: hidden; background: #fff repeating-linear-gradient(#555 0 1px, transparent 1px 2px) 14px 0 / 1px 100% no-repeat; padding-top: 2px; }
.sub { background: repeating-linear-gradient(#555 0 1px, transparent 1px 2px) 38px 0 / 1px 112px no-repeat; }
.row { height: 20px; display: flex; align-items: center; padding-left: 15px; white-space: nowrap; color: #000; font-size: 12px; position: relative; }
.row::before { content: ""; width: 13px; height: 1px; flex: none; background: repeating-linear-gradient(90deg, #555 0 1px, transparent 1px 2px); }
.row svg { width: 16px; height: 16px; margin-right: 8px; flex: none; }
.lv2 { padding-left: 38px; }
.ax-x svg { color: #f0541e; }
.ax-y svg { color: #2ea81e; }
.ax-z svg { color: #5a2ac0; }
.vscroll { width: 16px; flex: none; display: flex; flex-direction: column; position: relative; background: #f0f0f0; }
.up, .dn { height: 16px; position: relative; flex: none; }
.up::after { content: ""; position: absolute; left: 4px; top: 7px; border: 4px solid transparent; border-bottom: 4px solid #444; border-top: 0; }
.dn::after { content: ""; position: absolute; left: 4px; top: 6px; border: 4px solid transparent; border-top: 4px solid #444; border-bottom: 0; }
.vthumb { width: 15px; height: 181px; margin-top: 32px; border: 1px solid #a8a8a8; border-radius: 2px; background: linear-gradient(90deg, #f4f4f4, #d4d4d4); position: relative; }
.grips { position: absolute; left: 3px; top: 87px; width: 7px; height: 7px; background: repeating-linear-gradient(#666 0 1px, transparent 1px 2px); }
.dn { margin-top: auto; }
.hscroll { height: 15px; flex: none; display: flex; align-items: center; background: #f0f0f0; padding-left: 3px; position: relative; }
.lf, .rt { width: 16px; height: 15px; position: relative; flex: none; }
.lf::after { content: ""; position: absolute; left: 6px; top: 4px; border: 4px solid transparent; border-right: 4px solid #444; border-left: 0; }
.rt::after { content: ""; position: absolute; left: 6px; top: 4px; border: 4px solid transparent; border-left: 4px solid #444; border-right: 0; }
.hthumb { width: 108px; height: 15px; border: 1px solid #a8a8a8; border-radius: 2px; margin-left: 2px; background: linear-gradient(#f4f4f4, #cfcfcf); position: relative; }
.hgrips { position: absolute; left: 49px; top: 3px; width: 7px; height: 7px; background: repeating-linear-gradient(90deg, #666 0 1px, transparent 1px 2px); }
.rt { margin-left: 20px; }
.lowerbox { width: 192px; height: 121px; margin: 2px 0 0 5px; border: 1px solid #a0a0a0; background: #f0f0f0; flex: none; }
.tabs { height: 20px; flex: none; padding: 1px 0 0 5px; border-top: 1px solid #333; margin-top: 3px; margin-right: -1px; }
.tab { display: block; width: 77px; height: 17px; background: linear-gradient(#eaf3ff, #d2e4fc); border-radius: 0 0 4px 4px; color: #2d5a90; font-size: 12px; line-height: 16px; padding-left: 4px; box-shadow: 0 1px 0 #8fb3e2; }
.view { width: 510px; height: 489px; margin-left: 5px; flex: none; background: linear-gradient(#6aa5e1, #a9cbee 40%, #e6f1fc 78%, #fff); box-shadow: 0 -2px 0 #787878, 2px 0 0 #fff, 0 2px 0 #eee; }
.scene { display: block; width: 510px; height: 489px; }
.sc-y { font-size: 12px; fill: #f08070; }
.sc-x { font-size: 13px; fill: #8a8a8a; }
.sc-ax { font-size: 12px; }
.sc-ax.red { fill: #e81010; }
.sc-ax.blu { fill: #1090e8; }

.bottom { flex: none; height: 69px; display: flex; padding: 0 8px 0 25px; border-top: 1px solid #fff; border-bottom: 1px solid #6f9ad0; background: #bdd8fc; }
.cmd { width: 98px; flex: none; padding: 8px 0 0 10px; background: linear-gradient(90deg, #eaf3ff, #bdd8fc); }
.cmd-row { display: flex; align-items: center; height: 22px; gap: 1px; }
.cb { width: 20px; height: 20px; }
.cb svg { width: 18px; height: 18px; display: block; }
.cam { margin-left: 2px; }
.stop { width: 17px; height: 17px; margin: 0 2px; border-radius: 50%; background: #d81818; color: #fff; font-size: 6px; font-weight: bold; line-height: 17px; text-align: center; flex: none; }
.chr { margin-left: 1px; }
.propwrap { flex: 1; display: flex; flex-direction: column; }
.props { height: 33px; margin-top: 8px; display: flex; align-items: center; padding-left: 18px; flex: none; border-top: 1px solid #444; border-left: 1px solid #666; background: linear-gradient(#d8e7fc, #bcd6fb); box-shadow: 0 1px 0 #fff; }
.check { width: 15px; height: 15px; border: 1px solid #8e8e8e; background: #dfe7f2; flex: none; }
.tlabel { width: 8px; margin: 2px 0 0 1px; font-size: 11px; color: #333; }
.inp { height: 21px; background: #fff; border: 1px solid #a0a0a0; flex: none; }
.i1 { width: 55px; margin-left: 1px; }
.i2 { width: 55px; margin-left: 2px; }
.hl { display: flex; align-items: center; width: 139px; height: 24px; margin-left: 2px; background: linear-gradient(#ffe2a8, #ffc66c); border: 1px solid #3c8fd8; padding-left: 1px; font-size: 11.300px; color: #222; flex: none; }
.i3 { width: 56px; margin-left: auto; margin-right: 1px; }
.dis { margin-left: 2px; width: 27px; color: #7a8ba0; font-size: 11.300px; flex: none; }
.angle { width: 56px; margin-left: 2px; background: #eee; color: #8a8a8a; font-size: 12px; line-height: 19px; padding-left: 5px; }
.mode { width: 36px; margin-right: 4px; color: #111; font-size: 11.300px; flex: none; }
.mb { width: 20px; height: 20px; margin-right: 2px; background: #d8e7fc; box-shadow: inset 0 0 0 1px #9ab; }
.mb svg { width: 20px; height: 20px; display: block; }
.pressed { background: #b0b6c0; box-shadow: inset 1px 1px 0 #555; }
.proptabs { height: 24px; padding: 0 0 0 3px; }
.ptab { display: flex; align-items: center; gap: 1px; width: 67px; height: 22px; padding-left: 4px; background: linear-gradient(#e6f0fe, #d2e4fc); border-radius: 0 0 4px 4px; color: #2d5a90; font-size: 12px; box-shadow: 0 1px 0 #8fb3e2; white-space: nowrap; }
.ptab svg { width: 16px; height: 16px; flex: none; }

.status { flex: 1; padding-left: 6px; line-height: 22px; background: linear-gradient(#b8d4fa, #d4e5fc); color: #2d5a90; font-size: 12px; white-space: nowrap; overflow: hidden; }
```
